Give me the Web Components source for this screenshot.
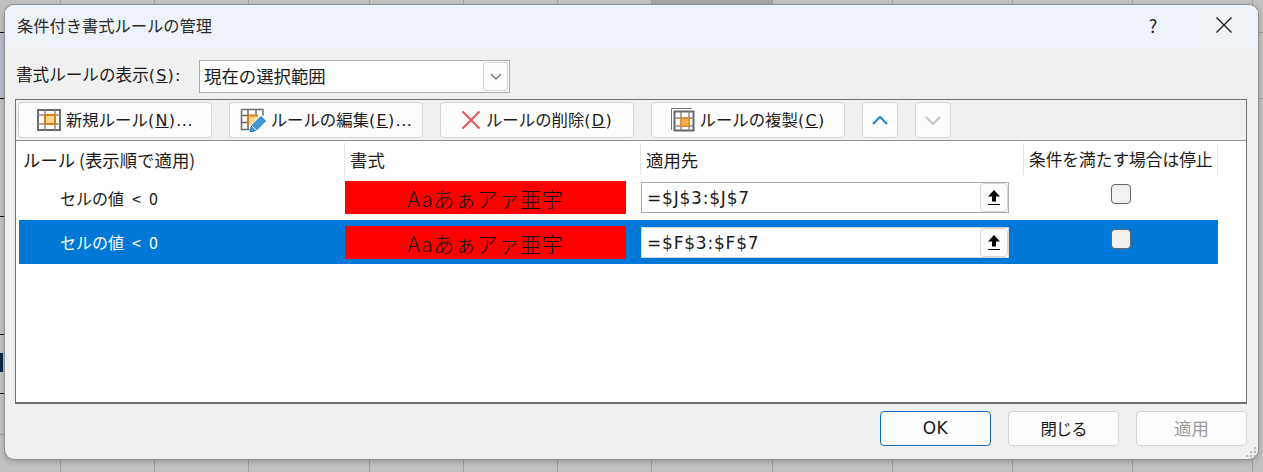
<!DOCTYPE html>
<html lang="ja">
<head>
<meta charset="utf-8">
<title>条件付き書式ルールの管理</title>
<style>
	html, body { margin: 0; padding: 0; height: 100%; overflow: hidden; }
	body { font: 16px "Noto Sans CJK JP", "Noto Sans", sans-serif; color: #1a1a1a; }
</style>
</head>
<body>
<x-desktop>
	<x-dialog heading="条件付き書式ルールの管理">
		<x-combo value="現在の選択範囲"></x-combo>

		<x-rule-toolbar slot="toolbar">
			<x-button wide key="N" tail="...">
				<svg slot="icon" width="24" height="22" viewBox="0 0 24 22">
					<path d="M1 1h22v20H1z" fill="#fff" stroke="#6a6a6a" stroke-width="2"/>
					<path d="M1 6h22M1 15h22M8 1v20M18 1v20" fill="none" stroke="#8c8c8c" stroke-width="1.500"/>
					<rect x="8" y="6" width="10" height="9" fill="#fcdc93" stroke="#e07b10" stroke-width="2"/>
				</svg>
				新規ルール
			</x-button>
			<x-button wide key="E" tail="...">
				<svg slot="icon" width="26" height="24" viewBox="0 1 26 24">
					<path d="M8 8h10v3l-7 7H8z" fill="#fcdc93"/>
					<path d="M1.500 2.500h22M1.500 2.500v20h8M1.500 8.500h6M1.500 15.500h6M8 2.500v20M16 2.500v5M23 2.500v6" fill="none" stroke="#6a6a6a" stroke-width="1.500"/>
					<path d="M8 8.500h10M8 8.500v9" fill="none" stroke="#e07b10" stroke-width="2"/>
					<path d="M10 25l1.500-6L21 9.500l4.500 4.500-9.500 9.500z" fill="#3f97d8" stroke="#1c74bd"/>
					<path d="M12 19l4.500 4.500" stroke="#fff"/>
				</svg>
				ルールの編集
			</x-button>
			<x-button wide key="D">
				<svg slot="icon" width="20" height="20" viewBox="0 0 20 20">
					<path d="M1.500 1.500l17 17M18.500 1.500l-17 17" fill="none" stroke="#ee5555" stroke-width="2"/>
				</svg>
				ルールの削除
			</x-button>
			<x-button wide key="C">
				<svg slot="icon" width="24" height="24" viewBox="0 0 24 24">
					<path d="M.500 22V.500H21" fill="none" stroke="#777" stroke-width="1"/>
					<path d="M3.500 3.500h19v19h-19z" fill="#fff" stroke="#666" stroke-width="2"/>
					<path d="M3.500 10h19M3.500 18h19M10 3.500v19M18 3.500v19" fill="none" stroke="#8c8c8c" stroke-width="1.500"/>
					<rect x="10" y="10" width="8" height="8" fill="#f6ad4f" stroke="#e58a1c" stroke-width="1.500"/>
				</svg>
				ルールの複製
			</x-button>
			<x-button square>
				<svg slot="icon" width="16" height="10" viewBox="0 0 16 10">
					<path d="M1 9l7-7 7 7" fill="none" stroke="#1b86d6" stroke-width="2"/>
				</svg>
			</x-button>
			<x-button square disabled>
				<svg slot="icon" width="16" height="10" viewBox="0 0 16 10">
					<path d="M1 2l7 7 7-7" fill="none" stroke="#c4c4c4" stroke-width="2"/>
				</svg>
			</x-button>
		</x-rule-toolbar>

		<x-rule-list slot="list">
			<x-rule-row rule="セルの値 &lt; 0" range="=$J$3:$J$7"></x-rule-row>
			<x-rule-row rule="セルの値 &lt; 0" range="=$F$3:$F$7" selected></x-rule-row>
		</x-rule-list>

		<x-button slot="footer" footer primary style="font-family:'DejaVu Sans',sans-serif;font-size:17px;letter-spacing:.5px">OK</x-button>
		<x-button slot="footer" footer style="letter-spacing:-1px">閉じる</x-button>
		<x-button slot="footer" footer disabled style="font-size:17.400px">適用</x-button>
	</x-dialog>
</x-desktop>

<script>
class XDesktop extends HTMLElement {
	constructor() {
		super();
		const ticks = [
			// x, y, w, h, colour
			[651, 0, 121, 5, '#a6a6a6'],
			[0, 33, 5, 65, '#b6bdcb'],
			[0, 32, 5, 1, '#111'],
			[0, 98, 5, 1, '#111'],
			[0, 216, 5, 1, '#111'],
			[0, 334, 5, 1, '#111'],
			[0, 353, 3, 19, '#0c2a44'],
			[0, 393, 5, 1, '#111'],
			[0, 434, 5, 1, '#9c9c9c'],
			[1258, 32, 5, 1, '#9c9c9c'],
			[1258, 98, 5, 1, '#9c9c9c'],
			[60, 0, 1, 472, '#a0a0a0'],
			[154, 0, 1, 472, '#a0a0a0'],
			[248, 0, 1, 472, '#a0a0a0'],
			[369, 0, 1, 472, '#a0a0a0'],
			[463, 0, 1, 472, '#a0a0a0'],
			[557, 0, 1, 472, '#a0a0a0'],
			[651, 0, 1, 472, '#a0a0a0'],
			[772, 0, 1, 472, '#a0a0a0'],
			[892, 0, 1, 472, '#a0a0a0'],
			[1012, 0, 1, 472, '#a0a0a0'],
			[1132, 0, 1, 472, '#a0a0a0'],
			[1252, 0, 1, 472, '#a0a0a0'],
		];
		const images = ticks.map((t) => `linear-gradient(${t[4]}, ${t[4]})`).join(',');
		const sizes = ticks.map((t) => `${t[2]}px ${t[3]}px`).join(',');
		const places = ticks.map((t) => `${t[0]}px ${t[1]}px`).join(',');

		this.attachShadow({ mode: 'open' }).innerHTML = `
			<style>
				:host {
					display: block;
					box-sizing: border-box;
					width: 1263px;
					height: 472px;
					padding: 5px 5px 13px;
					background-color: #c1c1c1;
					background-image: ${images};
					background-size: ${sizes};
					background-position: ${places};
					background-repeat: no-repeat;
				}
			</style>
			<slot></slot>
		`;
	}
}

class XDialog extends HTMLElement {
	constructor() {
		super();
		this.attachShadow({ mode: 'open' }).innerHTML = `
			<style>
				:host {
					display: flex;
					flex-direction: column;
					box-sizing: border-box;
					height: 454px;
					position: relative;
					background: #f0f0f0;
					border-radius: 9px;
					box-shadow: 0 0 0 1px #8f8f8f, 0 2px 6px rgba(0, 0, 0, .25);
					overflow: hidden;
				}
				header {
					display: flex;
					align-items: center;
					box-sizing: border-box;
					height: 43px;
					flex: none;
					padding: 0 0 3px 12px;
					background: linear-gradient(90deg, #eef3f8, #edf2fb 50%, #eef3f8);
					font-size: 16.250px;
					color: #2a2a2a;
				}
				h1 { flex: 1; margin: 0; font: inherit; }
				.help { width: 46px; text-align: center; font-size: 18px; margin-right: 25px; }
				.close { display: flex; justify-content: center; width: 46px; margin-right: 11px; }
				.filter {
					display: flex;
					align-items: center;
					gap: 3px;
					height: 33px;
					margin: 12px 0 6px 11px;
				}
				.filter label {
					width: 180px;
					padding-bottom: 6px;
					font-size: 16.600px;
					white-space: nowrap;
				}
				.filter b {
					font: 16px "DejaVu Sans", sans-serif;
					letter-spacing: 1.200px;
				}
				.panel {
					display: flex;
					flex-direction: column;
					height: 302px;
					margin: 0 11px 0 10px;
					border: 1px solid #6f7276;
					border-bottom-width: 2px;
				}
				footer {
					display: flex;
					justify-content: flex-end;
					gap: 17px;
					margin: 7px 11px 0 0;
				}
				.grip {
					position: absolute;
					right: 2px;
					bottom: 2px;
					width: 11px;
					height: 11px;
					background:
						radial-gradient(circle, #bdbdbd 1.500px, transparent 1.600px) 0 0 / 4px 4px;
					clip-path: polygon(100% 0, 100% 100%, 0 100%);
				}
			</style>
			<header>
				<h1></h1>
				<span class="help">?</span>
				<span class="close">
					<svg width="16" height="16" viewBox="0 0 16 16">
						<path d="M.500.500l15 15M15.500.500l-15 15" fill="none" stroke="#1a1a1a" stroke-width="1.300"/>
					</svg>
				</span>
			</header>
			<div class="filter">
				<label>書式ルールの表示<b>(<u>S</u>):</b></label>
				<slot></slot>
			</div>
			<div class="panel">
				<slot name="toolbar"></slot>
				<slot name="list"></slot>
			</div>
			<footer><slot name="footer"></slot></footer>
			<div class="grip"></div>
		`;
		this.shadowRoot.querySelector('h1').textContent = this.getAttribute('heading');
	}
}

class XCombo extends HTMLElement {
	constructor() {
		super();
		this.attachShadow({ mode: 'open' }).innerHTML = `
			<style>
				:host {
					display: flex;
					align-items: center;
					box-sizing: border-box;
					width: 311px;
					height: 33px;
					padding: 1px 1px 1px 4px;
					background: #fff;
					border: 1px solid #acacac;
					font-size: 17.400px;
				}
				span { flex: 1; margin-top: -2px; }
				i {
					display: flex;
					align-items: center;
					justify-content: center;
					width: 25px;
					height: 29px;
					background: #fdfdfd;
					border: 1px solid #d0d0d0;
					border-radius: 3px;
					box-sizing: border-box;
				}
			</style>
			<span></span>
			<i>
				<svg width="12" height="7" viewBox="0 0 12 7">
					<path d="M1 1l5 5 5-5" fill="none" stroke="#666" stroke-width="1.200"/>
				</svg>
			</i>
		`;
		this.shadowRoot.querySelector('span').textContent = this.getAttribute('value');
	}
}

class XButton extends HTMLElement {
	constructor() {
		super();
		this.attachShadow({ mode: 'open' }).innerHTML = `
			<style>
				:host {
					display: flex;
					align-items: center;
					justify-content: center;
					gap: 5px;
					box-sizing: border-box;
					height: 36px;
					background: #fdfdfd;
					border: 1px solid #d4d4d4;
					border-radius: 4px;
					color: #1a1a1a;
					white-space: nowrap;
					font-size: 16.400px;
				}
				:host([wide]) { width: 194px; }
				:host([square]) { width: 36px; }
				:host([footer]) { width: 111px; height: 35px; }
				:host([primary]) { border-color: #0f6cbd; }
				:host([disabled]) { color: #9a9a9a; }
				.text { display: flex; align-items: baseline; margin-top: -2px; }
				:host([square]) .text { display: none; }
				.key, .tail { font: 16px "DejaVu Sans", sans-serif; }
				.key { letter-spacing: 1.300px; }
				.tail { letter-spacing: .5px; }
				slot[name=icon]::slotted(*) { flex: none; }
			</style>
			<slot name="icon"></slot>
			<span class="text"><slot></slot><span class="key"></span><span class="tail"></span></span>
		`;
		const key = this.getAttribute('key');
		if (key) {
			const u = document.createElement('u');
			u.textContent = key;
			this.shadowRoot.querySelector('.key').append('(', u, ')');
		}
		this.shadowRoot.querySelector('.tail').textContent = this.getAttribute('tail') || '';
	}
}

class XRuleToolbar extends HTMLElement {
	constructor() {
		super();
		this.attachShadow({ mode: 'open' }).innerHTML = `
			<style>
				:host {
					display: flex;
					gap: 17px;
					box-sizing: border-box;
					flex: none;
					height: 41px;
					padding: 2px 0 0 2px;
					border-bottom: 1px solid #8d9094;
				}
			</style>
			<slot></slot>
		`;
	}
}

class XRuleList extends HTMLElement {
	constructor() {
		super();
		this.attachShadow({ mode: 'open' }).innerHTML = `
			<style>
				:host {
					display: block;
					flex: 1;
					background: #fff;
					padding: 2px 0 0 3px;
					color: #1a1a1a;
				}
				.head {
					display: grid;
					grid-template-columns: 326px 296px 383px 194px;
					height: 32px;
					margin-bottom: 5px;
					font-size: 17.400px;
				}
				.head span {
					display: flex;
					align-items: center;
					padding-left: 5px;
					border-right: 1px solid #e3e3e3;
					box-sizing: border-box;
					white-space: nowrap;
					overflow: hidden;
				}
				.head span:first-child { padding-left: 4px; }
				.head span:last-child { font-size: 16.700px; }
			</style>
			<div class="head">
				<span>ルール (表示順で適用)</span>
				<span>書式</span>
				<span>適用先</span>
				<span>条件を満たす場合は停止</span>
			</div>
			<slot></slot>
		`;
	}
}

class XRuleRow extends HTMLElement {
	constructor() {
		super();
		this.attachShadow({ mode: 'open' }).innerHTML = `
			<style>
				:host {
					display: grid;
					grid-template-columns: 326px 296px 383px 194px;
					box-sizing: border-box;
					width: 1199px;
					height: 40px;
					align-items: start;
				}
				:host([selected]) {
					height: 44px;
					background: #0078d7;
					color: #fff;
				}
				.rule { padding: 6px 0 0 41px; white-space: nowrap; word-spacing: 4.500px; }
				:host([selected]) .rule { padding-top: 10px; }
				.sample {
					display: flex;
					align-items: center;
					justify-content: center;
					width: 281px;
					height: 33px;
					margin-top: 1px;
					background: #f00;
					color: #111;
					font-size: 21px;
					font-weight: 300;
					letter-spacing: .7px;
				}
				:host([selected]) .sample { margin-top: 6px; }
				.ref {
					display: flex;
					align-items: center;
					box-sizing: border-box;
					width: 368px;
					height: 31px;
					margin-top: 2px;
					padding-left: 5px;
					background: #fff;
					border: 1px solid #acacac;
					color: #1a1a1a;
					font: 17px "DejaVu Sans", sans-serif;
					letter-spacing: .8px;
				}
				:host([selected]) .ref { margin-top: 7px; border-color: #d6d6d6; }
				.ref span { flex: 1; }
				.ref i {
					display: flex;
					align-items: center;
					justify-content: center;
					box-sizing: border-box;
					width: 28px;
					height: 29px;
					background: #fdfdfd;
					border: 1px solid #d6d6d6;
					border-radius: 4px;
				}
				.check {
					box-sizing: border-box;
					width: 20px;
					height: 20px;
					margin: 4px 0 0 87px;
					background: #f1f1f1;
					border: 1px solid #666;
					border-radius: 4px;
				}
				:host([selected]) .check { margin-top: 9px; }
			</style>
			<div class="rule"></div>
			<div class="sample">Aaあぁアァ亜宇</div>
			<div class="ref">
				<span></span>
				<i>
					<svg width="14" height="16" viewBox="0 0 14 16">
						<path d="M7 0L13 6.500H9V11.500H5V6.500H1z" fill="#000"/>
						<path d="M1 14.500h12" stroke="#000" stroke-width="1.200"/>
					</svg>
				</i>
			</div>
			<div class="check"></div>
		`;
		this.shadowRoot.querySelector('.rule').textContent = this.getAttribute('rule');
		this.shadowRoot.querySelector('.ref span').textContent = this.getAttribute('range');
	}
}

customElements.define('x-desktop', XDesktop);
customElements.define('x-dialog', XDialog);
customElements.define('x-combo', XCombo);
customElements.define('x-button', XButton);
customElements.define('x-rule-toolbar', XRuleToolbar);
customElements.define('x-rule-list', XRuleList);
customElements.define('x-rule-row', XRuleRow);
</script>
</body>
</html>
